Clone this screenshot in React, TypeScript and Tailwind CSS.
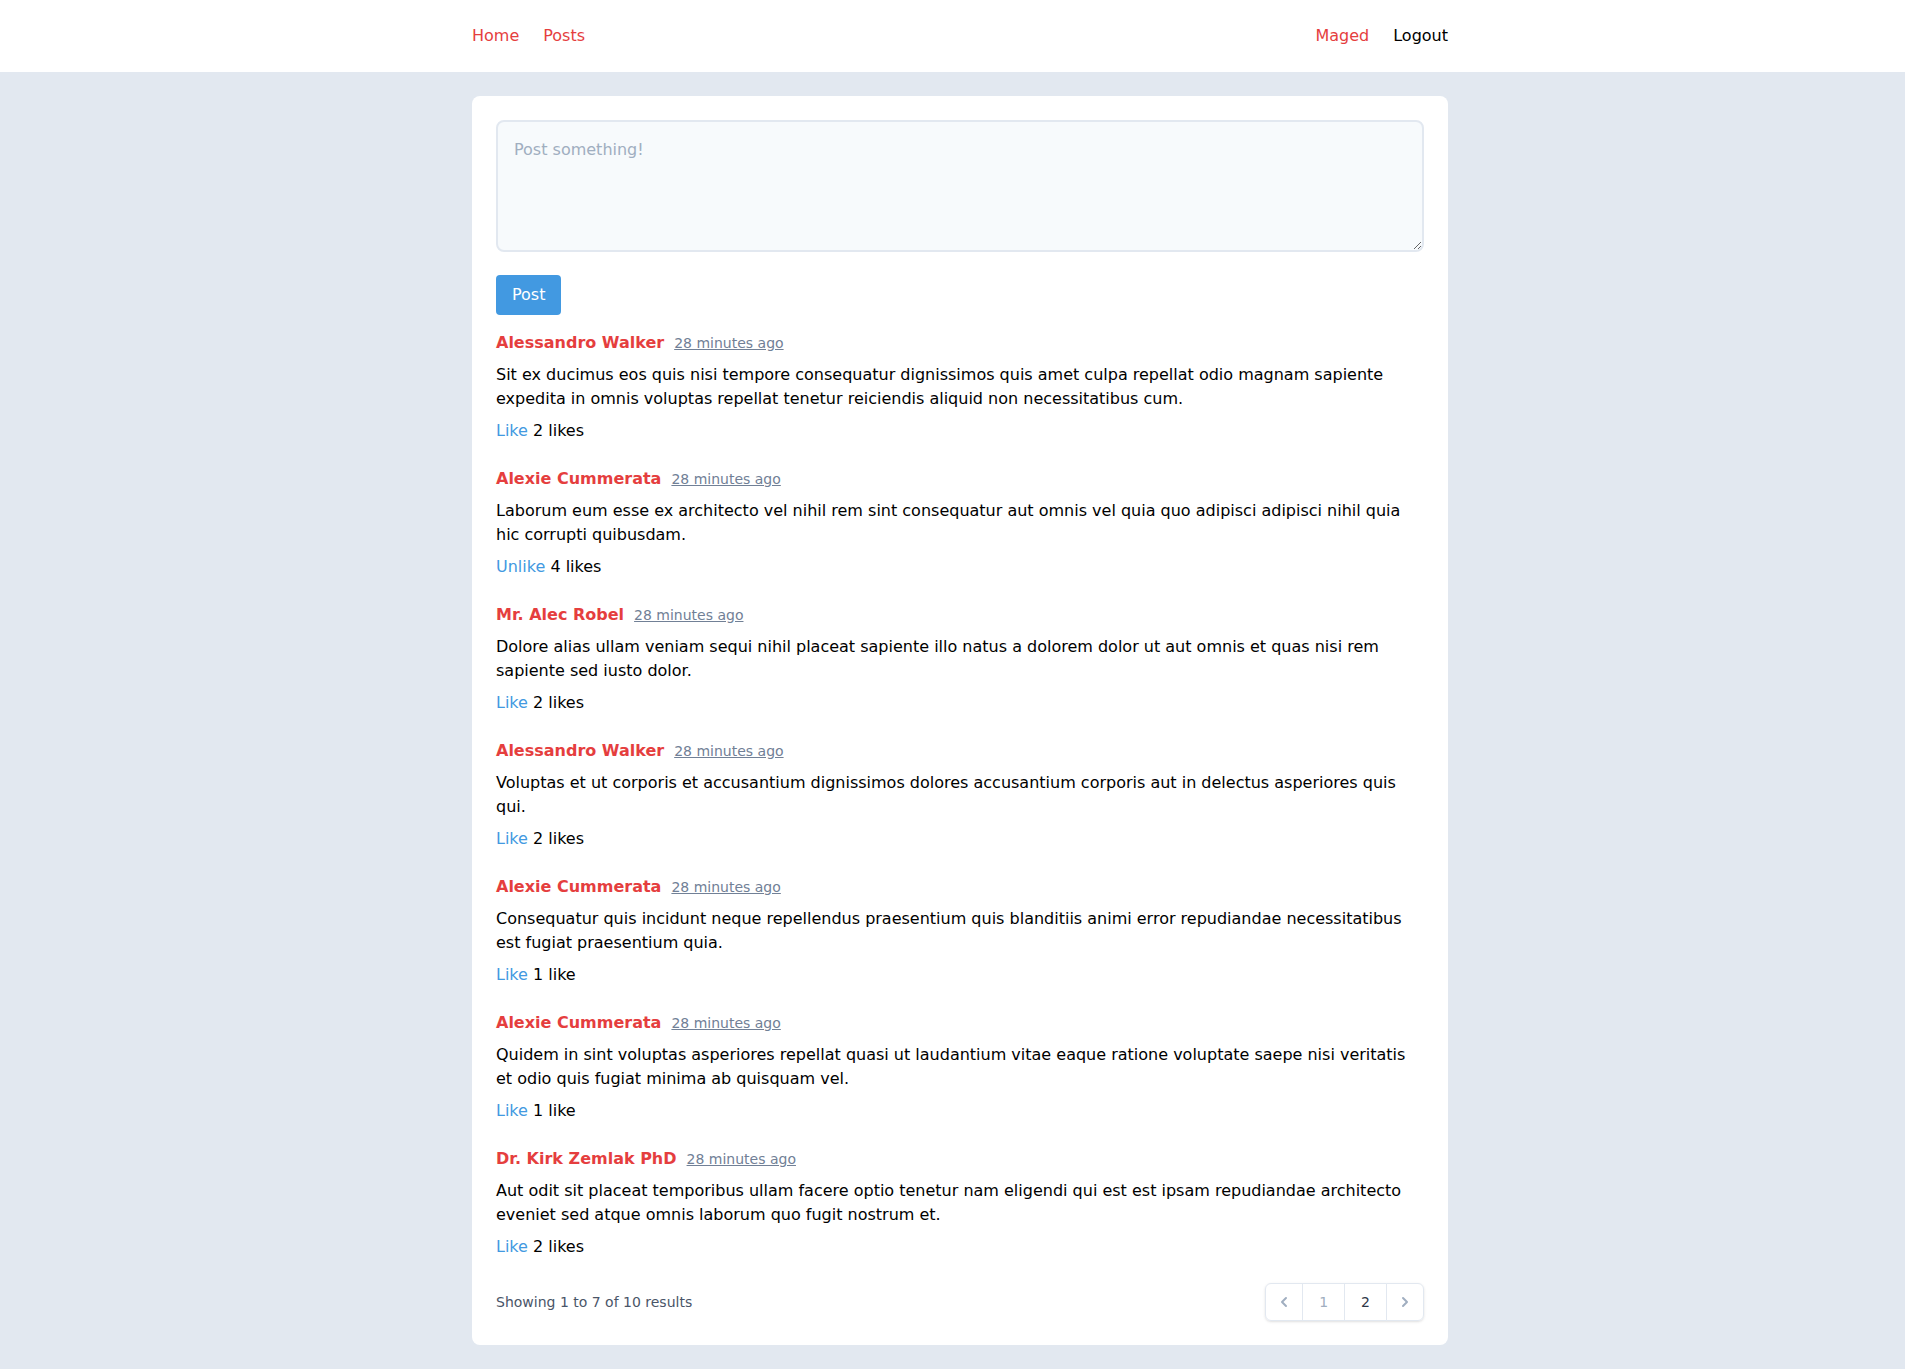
import React from 'react';

const posts = [
  { name: 'Alessandro Walker', body: 'Sit ex ducimus eos quis nisi tempore consequatur dignissimos quis amet culpa repellat odio magnam sapiente expedita in omnis voluptas repellat tenetur reiciendis aliquid non necessitatibus cum.', liked: false, likes: 2 },
  { name: 'Alexie Cummerata', body: 'Laborum eum esse ex architecto vel nihil rem sint consequatur aut omnis vel quia quo adipisci adipisci nihil quia hic corrupti quibusdam.', liked: true, likes: 4 },
  { name: 'Mr. Alec Robel', body: 'Dolore alias ullam veniam sequi nihil placeat sapiente illo natus a dolorem dolor ut aut omnis et quas nisi rem sapiente sed iusto dolor.', liked: false, likes: 2 },
  { name: 'Alessandro Walker', body: 'Voluptas et ut corporis et accusantium dignissimos dolores accusantium corporis aut in delectus asperiores quis qui.', liked: false, likes: 2 },
  { name: 'Alexie Cummerata', body: 'Consequatur quis incidunt neque repellendus praesentium quis blanditiis animi error repudiandae necessitatibus est fugiat praesentium quia.', liked: false, likes: 1 },
  { name: 'Alexie Cummerata', body: 'Quidem in sint voluptas asperiores repellat quasi ut laudantium vitae eaque ratione voluptate saepe nisi veritatis et odio quis fugiat minima ab quisquam vel.', liked: false, likes: 1 },
  { name: 'Dr. Kirk Zemlak PhD', body: 'Aut odit sit placeat temporibus ullam facere optio tenetur nam eligendi qui est est ipsam repudiandae architecto eveniet sed atque omnis laborum quo fugit nostrum et.', liked: false, likes: 2 },
];

const ChevronLeft = () => (
  <svg className="w-5 h-5" fill="currentColor" viewBox="0 0 20 20">
    <path fillRule="evenodd" d="M12.707 5.293a1 1 0 010 1.414L9.414 10l3.293 3.293a1 1 0 01-1.414 1.414l-4-4a1 1 0 010-1.414l4-4a1 1 0 011.414 0z" clipRule="evenodd" />
  </svg>
);

const ChevronRight = () => (
  <svg className="w-5 h-5" fill="currentColor" viewBox="0 0 20 20">
    <path fillRule="evenodd" d="M7.293 14.707a1 1 0 010-1.414L10.586 10 7.293 6.707a1 1 0 011.414-1.414l4 4a1 1 0 010 1.414l-4 4a1 1 0 01-1.414 0z" clipRule="evenodd" />
  </svg>
);

export default function App() {
  return (
    <div className="min-h-screen bg-[#e2e8f0] pb-6 text-black" style={{ fontFamily: '"DejaVu Sans", sans-serif' }}>
      <nav className="bg-white py-6 pl-[15px]">
        <div className="w-[976px] mx-auto flex justify-between leading-6">
          <div className="flex gap-6">
            <a href="#" className="text-[#e53e3e]">Home</a>
            <a href="#" className="text-[#e53e3e]">Posts</a>
          </div>
          <div className="flex gap-6">
            <a href="#" className="text-[#e53e3e]">Maged</a>
            <button type="button" className="text-black">Logout</button>
          </div>
        </div>
      </nav>

      <div className="pl-[15px]">
        <div className="w-[976px] mx-auto mt-6 bg-white p-6 rounded-lg">
          <form className="mb-4">
            <textarea
              rows={4}
              placeholder="Post something!"
              className="block w-full bg-[#f7fafc] border-2 border-[#e2e8f0] rounded-lg p-4 leading-6 placeholder:text-[#a0aec0] outline-none"
            />
            <div className="mt-[23px]">
              <button type="button" className="bg-[#4299e1] text-white px-4 py-2 rounded leading-6">Post</button>
            </div>
          </form>

          {posts.map((post, i) => (
            <div key={i} className="mb-6">
              <div className="flex items-baseline leading-6">
                <a href="#" className="font-bold text-[#e53e3e]">{post.name}</a>
                <span className="ml-2.5 text-sm text-[#718096] underline">28 minutes ago</span>
              </div>
              <p className="mt-2 mb-2 leading-6">{post.body}</p>
              <div className="leading-6">
                <button type="button" className="text-[#4299e1]">{post.liked ? 'Unlike' : 'Like'}</button>{' '}
                <span>{post.likes} {post.likes === 1 ? 'like' : 'likes'}</span>
              </div>
            </div>
          ))}

          <div className="flex items-center justify-between">
            <p className="text-sm leading-5 text-[#4a5568]">Showing 1 to 7 of 10 results</p>
            <span className="flex rounded-md shadow-sm">
              <span className="flex items-center px-2 py-2 text-[#a0aec0] bg-white border border-[#e2e8f0] rounded-l-md">
                <ChevronLeft />
              </span>
              <span className="-ml-px px-4 py-2 text-sm leading-5 text-[#a0aec0] bg-white border border-[#e2e8f0]">1</span>
              <a href="#" className="-ml-px px-4 py-2 text-sm leading-5 text-[#2d3748] bg-white border border-[#e2e8f0]">2</a>
              <a href="#" className="-ml-px flex items-center px-2 py-2 text-[#a0aec0] bg-white border border-[#e2e8f0] rounded-r-md">
                <ChevronRight />
              </a>
            </span>
          </div>
        </div>
      </div>
    </div>
  );
}
